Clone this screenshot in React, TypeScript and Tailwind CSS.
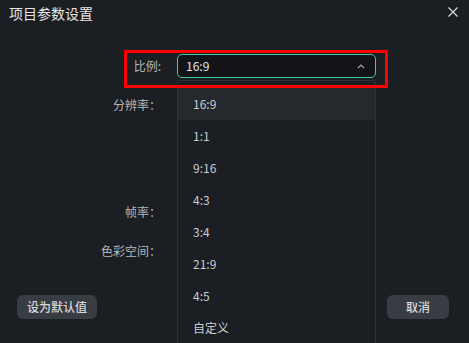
const ratios = ['16:9', '1:1', '9:16', '4:3', '3:4', '21:9', '4:5', '自定义'];

function Row({ label, className, children }: { label: string; className?: string; children?: React.ReactNode }) {
  return (
    <div className={`flex ${className ?? ''}`}>
      <div className="flex h-[22px] w-[161px] shrink-0 items-center justify-end text-[12px] text-[#b4b8be]">
        {label}
      </div>
      <div className="ml-[16px] w-[199px]">{children}</div>
    </div>
  );
}

export default function App() {
  return (
    <div
      className="relative flex h-[343px] w-[469px] flex-col overflow-hidden bg-[#1b1e22]"
      style={{ fontFamily: '"Noto Sans CJK SC", "Noto Sans", sans-serif' }}
    >
      {/* Title bar */}
      <header className="flex h-[26px] items-center justify-between pl-[9px] pr-[11px]">
        <h1 className="text-[14px] leading-[20px] text-[#e4e6e9]">项目参数设置</h1>
        <svg className="-mt-[3px]" width="10" height="10" viewBox="0 0 10 10" fill="none">
          <path d="M0.5 0.5 L9.5 9.5 M9.5 0.5 L0.5 9.5" stroke="#d8dadd" strokeWidth="1.2" />
        </svg>
      </header>

      {/* Form */}
      <div className="mt-[28px] flex flex-col">
        <div className="flex items-center">
          <div className="w-[161px] text-right text-[12px] text-[#b4b8be]">比例:</div>
          <div className="ml-[16px] flex h-[24px] w-[199px] items-center justify-between rounded-[5px] border border-solid border-[#46c9a6] bg-[#121418] pl-[8px] pr-[10px]">
            <span className="text-[12px] text-[#e6e8eb]">16:9</span>
            <svg width="8" height="5" viewBox="0 0 8 5" fill="none">
              <path d="M0.8 4.2 L4 1 L7.2 4.2" stroke="#a9adb3" strokeWidth="1.1" />
            </svg>
          </div>
        </div>
        <Row label="分辨率：" className="mt-[16px]" />
        <Row label="帧率：" className="mt-[85px]" />
        <Row label="色彩空间：" className="mt-[17px]" />
      </div>

      {/* Footer buttons */}
      <footer className="mt-auto mb-[24px] flex items-center justify-between pl-[17px] pr-[20px]">
        <button className="flex h-[24px] w-[80px] items-center justify-center rounded-[6px] bg-[#383c43] text-[12px] font-medium text-[#d6d9dd]">
          设为默认值
        </button>
        <button className="flex h-[24px] w-[62px] items-center justify-center rounded-[6px] bg-[#383c43] text-[12px] font-medium text-[#d6d9dd]">
          取消
        </button>
      </footer>

      {/* Dropdown list */}
      <div className="absolute left-[177px] top-[80px] w-[199px] rounded-t-[4px] border border-b-0 border-[#30333a] bg-[#1b1e22] pt-[7px]">
        {ratios.map((r, i) => (
          <div
            key={r}
            className={`flex h-[32px] items-center pl-[15px] text-[12px] text-[#c9cdd2] ${i === 0 ? 'bg-[#25282d]' : ''}`}
          >
            {r}
          </div>
        ))}
      </div>

      {/* Highlight box */}
      <div className="pointer-events-none absolute left-[124px] top-[50px] h-[38px] w-[264px] border-[3px] border-[#ff0000]" />
    </div>
  );
}
